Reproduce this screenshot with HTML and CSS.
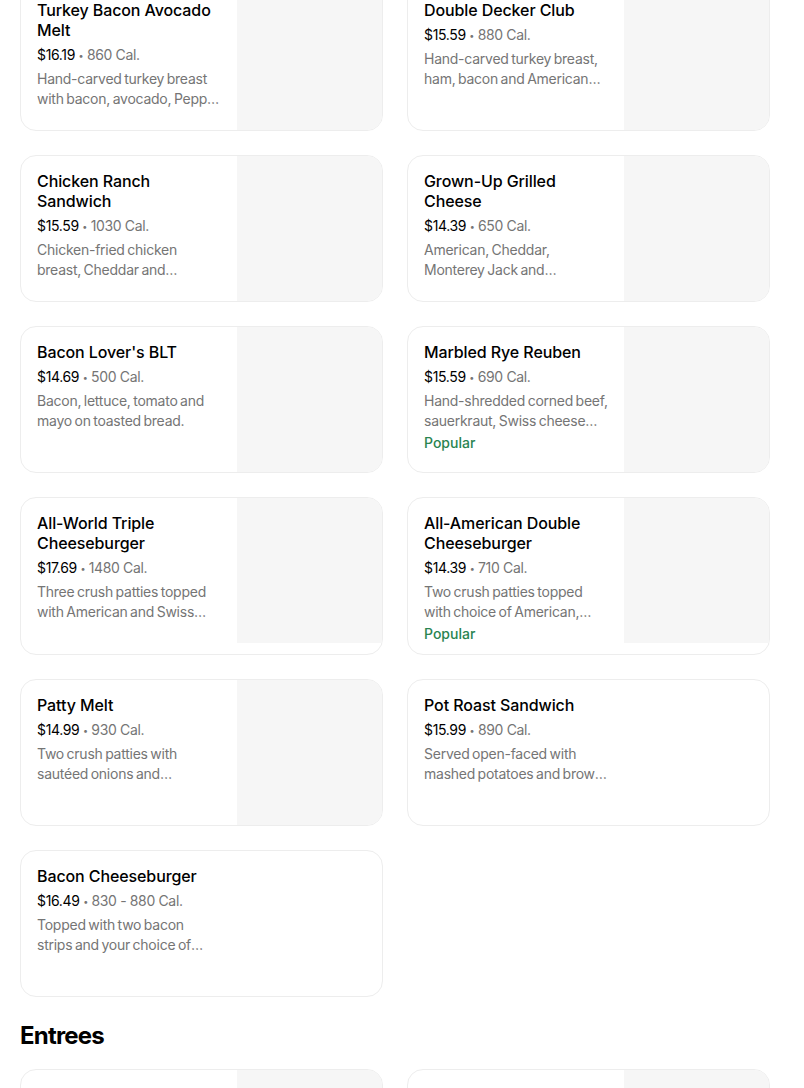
FILE: index.html
```html
<!DOCTYPE html>
<html lang="en">
<head>
  <meta charset="UTF-8">
  <meta name="viewport" content="width=device-width, initial-scale=1.0">
  <title>Menu</title>
  <link rel="stylesheet" href="styles.css">
</head>
<body>
  <div class="menu">
    <section class="section">
      <div class="grid" id="sandwiches"></div>
    </section>

    <section class="section">
      <h2 class="section-title">Entrees</h2>
      <div class="grid" id="entrees"></div>
    </section>
  </div>

  <script>
    // piatti per sezione: photo = false quando non c'è la foto
    const sandwiches = [
      { nome: "Turkey Bacon Avocado Melt", prezzo: "$16.19", cal: "860 Cal.", desc: "Hand-carved turkey breast with bacon, avocado, Pepper Jack cheese and chipotle mayo.", photo: true },
      { nome: "Double Decker Club", prezzo: "$15.59", cal: "880 Cal.", desc: "Hand-carved turkey breast, ham, bacon and American cheese on toasted bread.", photo: true },
      { nome: "Chicken Ranch Sandwich", prezzo: "$15.59", cal: "1030 Cal.", desc: "Chicken-fried chicken breast, Cheddar and Monterey Jack with ranch.", photo: true },
      { nome: "Grown-Up Grilled Cheese", prezzo: "$14.39", cal: "650 Cal.", desc: "American, Cheddar, Monterey Jack and Provolone on grilled sourdough.", photo: true },
      { nome: "Bacon Lover's BLT", prezzo: "$14.69", cal: "500 Cal.", desc: "Bacon, lettuce, tomato and mayo on toasted bread.", photo: true },
      { nome: "Marbled Rye Reuben", prezzo: "$15.59", cal: "690 Cal.", desc: "Hand-shredded corned beef, sauerkraut, Swiss cheese and Thousand Island on marbled rye.", photo: true, popular: true },
      { nome: "All-World Triple Cheeseburger", prezzo: "$17.69", cal: "1480 Cal.", desc: "Three crush patties topped with American and Swiss cheese, lettuce and tomato.", photo: true },
      { nome: "All-American Double Cheeseburger", prezzo: "$14.39", cal: "710 Cal.", desc: "Two crush patties topped with choice of American, Cheddar or Swiss cheese.", photo: true, popular: true },
      { nome: "Patty Melt", prezzo: "$14.99", cal: "930 Cal.", desc: "Two crush patties with sautéed onions and Thousand Island on marbled rye.", photo: true },
      { nome: "Pot Roast Sandwich", prezzo: "$15.99", cal: "890 Cal.", desc: "Served open-faced with mashed potatoes and brown gravy.", photo: false },
      { nome: "Bacon Cheeseburger", prezzo: "$16.49", cal: "830 - 880 Cal.", desc: "Topped with two bacon strips and your choice of cheese, lettuce, tomato and onion.", photo: false }
    ];

    const entrees = [
      { nome: "Chicken Fried Steak", prezzo: "$17.99", cal: "1210 Cal.", desc: "Hand-breaded and topped with country gravy.", photo: true },
      { nome: "Pot Roast", prezzo: "$18.49", cal: "780 Cal.", desc: "Slow-cooked and served with vegetables.", photo: true }
    ];

    function riempi(id, piatti) {
      const grid = document.getElementById(id);
      piatti.forEach(p => {
        const card = `<div class="card">
          <div class="info">
            <h3 class="name">${p.nome}</h3>
            <div class="meta"><span class="price">${p.prezzo}</span> <span class="dot">•</span> ${p.cal}</div>
            <p class="desc">${p.desc}</p>
            ${p.popular ? '<div class="tag">Popular</div>' : ''}
          </div>
          ${p.photo ? '<div class="thumb"></div>' : ''}
        </div>`;
        grid.innerHTML += card;
      });
    }

    riempi("sandwiches", sandwiches);
    riempi("entrees", entrees);
  </script>
</body>
</html>
```

FILE: styles.css
```css
body {
  margin: 0;
  font-family: Inter, "Liberation Sans", sans-serif;
  color: #000;
  background: #fff;
}

/* page is scrolled a bit: first row starts above the fold */
.menu {
  margin-top: -16px;
  padding: 0 34px 0 20px;
}

.section-title {
  margin: 23px 0 17px;
  font-size: 24px;
  line-height: 32px;
  font-weight: 700;
  letter-spacing: -0.8px;
}

.grid {
  display: grid;
  grid-template-columns: 1fr 1fr;
  gap: 24px;
}

.card {
  display: flex;
  align-items: flex-start;
  min-height: 145px;
  border: 1px solid #ededed;
  border-radius: 16px;
  overflow: hidden;
}

.info {
  flex: 0 0 216px;
  box-sizing: border-box;
  padding: 15px 16px 10px;
}

.name {
  margin: 0;
  font-size: 16px;
  line-height: 20px;
  font-weight: 500;
  letter-spacing: -0.1px;
}

.meta {
  margin-top: 5px;
  font-size: 14px;
  line-height: 20px;
  letter-spacing: -0.35px;
  color: #757575;
}

.price {
  color: #000;
}

.dot {
  font-size: 9px;
  vertical-align: 1px;
}

.desc {
  margin: 3px 0 0;
  font-size: 14px;
  line-height: 20px;
  letter-spacing: -0.25px;
  word-spacing: -1.1px;
  color: #757575;
  display: -webkit-box;
  -webkit-line-clamp: 2;
  -webkit-box-orient: vertical;
  overflow: hidden;
}

.tag {
  margin-top: 2px;
  font-size: 14px;
  line-height: 20px;
  font-weight: 500;
  color: #2a8451;
}

.thumb {
  flex: 0 0 145px;
  height: 145px;
  margin-left: auto;
  background: #f6f6f6;
}
```
